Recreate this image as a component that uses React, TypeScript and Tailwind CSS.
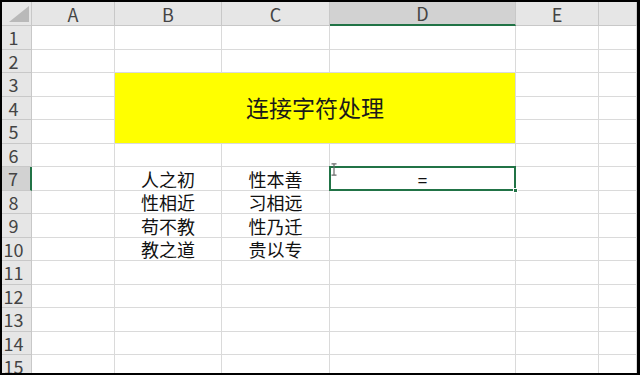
import React from "react";

const cols = ["A", "B", "C", "D", "E", ""];
const data: Record<number, [string, string]> = {
  7: ["人之初", "性本善"],
  8: ["性相近", "习相远"],
  9: ["苟不教", "性乃迁"],
  10: ["教之道", "贵以专"],
};

const font = { fontFamily: '"Noto Sans CJK SC", "Noto Sans", sans-serif' };

export default function App() {
  const rows = Array.from({ length: 15 }, (_, i) => i + 1);
  return (
    <div className="w-[640px] h-[375px] bg-black pt-[2px] pl-[2px] pr-[3px] pb-[2px] overflow-hidden" style={font}>
      <div className="w-full h-full bg-white overflow-hidden relative">
        <div className="grid grid-cols-[30px_83px_107px_108px_186px_83px_1fr] grid-rows-[24px_repeat(15,23.5px)]">
          {/* corner */}
          <div className="bg-[#e6e6e6] border-r border-b border-[#c8c8c8] relative">
            <div className="absolute right-[2px] bottom-[3px] w-0 h-0 border-l-[20px] border-l-transparent border-b-[16px] border-b-[#b9b9b9]" />
          </div>
          {cols.map((c, i) =>
            c === "D" ? (
              <div key={i} className="bg-[#d2d2d2] border-r border-[#c8c8c8] border-b-2 border-b-[#217346] flex items-center justify-center text-[18px] leading-none text-[#444]">
                {c}
              </div>
            ) : (
              <div key={i} className="bg-[#e6e6e6] border-r border-b border-[#c8c8c8] flex items-center justify-center text-[18px] leading-none text-[#444]">
                {c}
              </div>
            )
          )}
          {rows.map((r) => (
            <React.Fragment key={r}>
              {r === 7 ? (
                <div className="bg-[#d2d2d2] border-b border-[#c8c8c8] border-r-2 border-r-[#217346] flex items-center justify-center pr-[6px] text-[18px] leading-none text-[#444]">
                  {r}
                </div>
              ) : (
                <div className="bg-[#e6e6e6] border-r border-b border-[#c8c8c8] flex items-center justify-center pr-[6px] text-[18px] leading-none text-[#444]">
                  {r}
                </div>
              )}
              <div className="border-r border-b border-[#dadada]" />
              {r === 3 && (
                <div className="col-span-3 row-span-3 bg-[#ffff00] border-r border-b border-[#dadada] flex items-center justify-center pb-[2px] text-[23px] text-[#1a1a1a]">
                  连接字符处理
                </div>
              )}
              {(r < 3 || r > 5) && (
                <>
                  <div className="border-r border-b border-[#dadada] flex items-end justify-center text-[18px] leading-[22px] text-[#111]">
                    {data[r]?.[0] ?? ""}
                  </div>
                  <div className="border-r border-b border-[#dadada] flex items-end justify-center text-[18px] leading-[22px] text-[#111]">
                    {data[r]?.[1] ?? ""}
                  </div>
                  {r === 7 ? (
                    <div className="relative border-r border-b border-[#dadada] flex items-center justify-center text-[17px] text-[#111]">
                      <span className="relative top-[1px]">=</span>
                      <div className="absolute left-[-1px] top-[-1px] right-[-1px] bottom-[-1px] border-2 border-[#217346]" />
                      <div className="absolute right-[-3px] bottom-[-3px] w-[5px] h-[5px] bg-[#217346] border border-white" />
                      <svg className="absolute left-[1px] top-[-4px]" width="6" height="13" viewBox="0 0 6 13">
                        <path d="M0.5 0.8 H5.5 M3 0.8 V12.2 M0.5 12.2 H5.5" stroke="#6a6a6a" strokeWidth="1.2" fill="none" />
                      </svg>
                    </div>
                  ) : (
                    <div className="border-r border-b border-[#dadada]" />
                  )}
                </>
              )}
              <div className="border-r border-b border-[#dadada]" />
              <div className="border-r border-b border-[#dadada]" />
            </React.Fragment>
          ))}
        </div>
      </div>
    </div>
  );
}
